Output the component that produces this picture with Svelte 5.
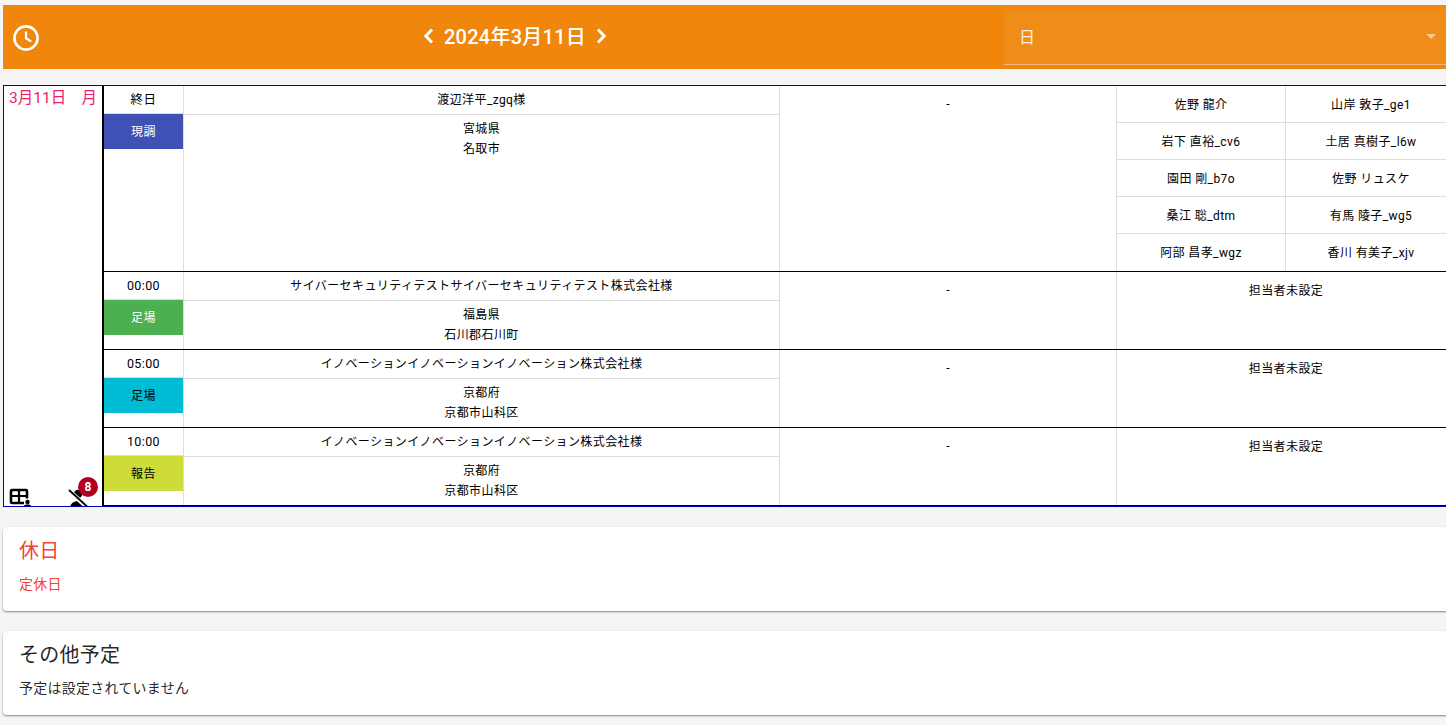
<script>
  const jobs = [
    { time: '00:00', tag: '足場', color: '#4caf50', fg: '#fff', client: 'サイバーセキュリティテストサイバーセキュリティテスト株式会社様', pref: '福島県', city: '石川郡石川町' },
    { time: '05:00', tag: '足場', color: '#00bcd4', fg: '#000', client: 'イノベーションイノベーションイノベーション株式会社様', pref: '京都府', city: '京都市山科区' },
    { time: '10:00', tag: '報告', color: '#cddc39', fg: '#000', client: 'イノベーションイノベーションイノベーション株式会社様', pref: '京都府', city: '京都市山科区' }
  ];
  const staff = ['佐野 龍介', '山岸 敦子_ge1', '岩下 直裕_cv6', '土居 真樹子_l6w', '園田 剛_b7o', '佐野 リュスケ', '桑江 聡_dtm', '有馬 陵子_wg5', '阿部 昌孝_wgz', '香川 有美子_xjv'];
</script>

<div class="page">
  <header class="bar">
    <svg class="clock" viewBox="0 0 26 26" aria-hidden="true">
      <circle cx="13" cy="13" r="11.6" fill="none" stroke="#fff" stroke-width="2.6" />
      <path d="M13 6.500v6.800l5.200 3.100" fill="none" stroke="#fff" stroke-width="2.300" />
    </svg>
    <div class="title">
      <svg class="chev" viewBox="0 0 11 16" aria-hidden="true"><path d="M9 1.500 2.800 8 9 14.500" fill="none" stroke="#fff" stroke-width="3" /></svg>
      <span>2024年3月11日</span>
      <svg class="chev" viewBox="0 0 11 16" aria-hidden="true"><path d="M2 1.500 8.200 8 2 14.500" fill="none" stroke="#fff" stroke-width="3" /></svg>
    </div>
    <div class="select">
      <span>日</span>
      <i class="caret"></i>
    </div>
  </header>

  <section class="sheet">
    <div class="day">
      <div class="date"><span>3月11日</span><span>月</span></div>
      <div class="tools">
        <svg class="tool" viewBox="0 0 24 24" aria-hidden="true">
          <rect x="2" y="3" width="16" height="13" rx="1" fill="none" stroke="#000" stroke-width="2.600" />
          <path d="M1 9h18M10 3v13" stroke="#000" stroke-width="2.200" />
          <path d="M15 11.500h8v9h-8z" fill="#fff" />
          <circle cx="18.500" cy="15" r="2.200" fill="#000" />
          <path d="M14 21c0-2.500 2.200-3.500 4.500-3.500s4.500 1 4.500 3.500z" fill="#000" />
        </svg>
        <div class="tool-wrap">
          <svg class="tool" viewBox="0 0 24 24" aria-hidden="true">
            <circle cx="13" cy="7" r="4.200" fill="#000" />
            <path d="M5 21c0-5 5-7 8-7s8 2 8 7z" fill="#000" />
            <path d="M3 3l20 18" stroke="#fff" stroke-width="4.500" />
            <path d="M4 3l18 16.500" stroke="#000" stroke-width="1.800" />
          </svg>
          <b class="badge">8</b>
        </div>
      </div>
    </div>

    <div class="rows">
      <div class="row first">
        <div class="when">
          <div class="time">終日</div>
          <div class="tag" style="background:#3f51b5;color:#fff">現調</div>
        </div>
        <div class="where">
          <div class="client">渡辺洋平_zgq様</div>
          <div class="addr"><span>宮城県</span><span>名取市</span></div>
        </div>
        <div class="dash">-</div>
        <div class="staff">
          {#each staff as name}
            <div class="person">{name}</div>
          {/each}
        </div>
      </div>

      {#each jobs as job}
        <div class="row">
          <div class="when">
            <div class="time">{job.time}</div>
            <div class="tag" style="background:{job.color};color:{job.fg}">{job.tag}</div>
          </div>
          <div class="where">
            <div class="client">{job.client}</div>
            <div class="addr"><span>{job.pref}</span><span>{job.city}</span></div>
          </div>
          <div class="dash">-</div>
          <div class="none">担当者未設定</div>
        </div>
      {/each}
    </div>
  </section>

  <section class="card holiday">
    <h2>休日</h2>
    <p>定休日</p>
  </section>
  <section class="card">
    <h2>その他予定</h2>
    <p>予定は設定されていません</p>
  </section>
</div>

<style>
  :global(body) {
    margin: 0;
    background: #f5f5f5;
    overflow: hidden;
    font-family: Roboto, "Noto Sans CJK JP", sans-serif;
    color: rgba(0, 0, 0, 0.87);
  }
  .page {
    width: 1450px;
    height: 725px;
    padding: 5px 0 0 3px;
    box-sizing: border-box;
    overflow: hidden;
  }
  .bar {
    height: 64px;
    background: #f0860b;
    display: flex;
    align-items: center;
    color: #fff;
  }
  .clock {
    width: 26px;
    height: 26px;
    margin: 1px 0 0 10px;
    flex: none;
  }
  .title {
    width: 965px;
    flex: none;
    box-sizing: border-box;
    padding-right: 13px;
    display: flex;
    align-items: center;
    justify-content: center;
    gap: 10px;
    font-size: 20px;
    font-weight: 500;
    letter-spacing: 0.25px;
    margin-top: -3px;
  }
  .chev {
    width: 11px;
    height: 16px;
  }
  .select {
    flex: 1;
    align-self: flex-start;
    margin-top: 4px;
    height: 55px;
    padding: 0 15px;
    background: rgba(255, 255, 255, 0.06);
    border-bottom: 1px solid rgba(255, 255, 255, 0.4);
    display: flex;
    align-items: center;
    justify-content: space-between;
    font-size: 16px;
    color: rgba(255, 255, 255, 0.87);
  }
  .select span {
    margin-top: -1px;
  }
  .caret {
    border: 5px solid transparent;
    border-top-color: rgba(255, 255, 255, 0.55);
    border-bottom-width: 0;
    margin-right: -1px;
  }
  .sheet {
    margin-top: 16px;
    display: flex;
    background: #fff;
    border: 1px solid #0000c0;
    height: 420px;
    color: #000;
  }
  .day {
    width: 98px;
    flex: none;
    border-right: 2px solid #000;
    display: flex;
    flex-direction: column;
    justify-content: space-between;
    overflow: hidden;
  }
  .date {
    display: flex;
    justify-content: space-between;
    padding: 2px 5px 0;
    font-size: 15.5px;
    line-height: 20px;
    color: #e91e63;
  }
  .tools {
    display: flex;
    justify-content: space-between;
    align-items: flex-end;
    height: 20px;
    padding: 0 13px 0 5px;
  }
  .tool {
    width: 24px;
    height: 24px;
    flex: none;
    display: block;
    margin-bottom: -5px;
  }
  .tool-wrap {
    position: relative;
  }
  .badge {
    position: absolute;
    top: -10px;
    left: 13px;
    width: 20px;
    height: 20px;
    border-radius: 50%;
    background: #b00020;
    color: #fff;
    font-size: 12px;
    line-height: 20px;
    text-align: center;
  }
  .rows {
    flex: 1;
    display: flex;
    flex-direction: column;
    min-width: 0;
  }
  .row {
    display: grid;
    grid-template-columns: 80px 596px 337px 1fr;
    height: 78px;
    box-sizing: border-box;
    border-bottom: 1px solid #000;
    font-size: 12px;
    letter-spacing: 0.4px;
    line-height: 18px;
    text-align: center;
  }
  .row.first {
    height: 186px;
  }
  .when,
  .where,
  .dash {
    border-right: 1px solid #ddd;
    min-width: 0;
  }
  .time {
    height: 27px;
    line-height: 27px;
    border-bottom: 1px solid #ddd;
    font-size: 12.5px;
  }
  .client {
    height: 28px;
    line-height: 29px;
    border-bottom: 1px solid #ddd;
  }
  .tag {
    height: 35px;
    line-height: 36px;
  }
  .addr {
    display: flex;
    flex-direction: column;
    padding-top: 4px;
    line-height: 20px;
  }
  .dash {
    padding-top: 9px;
  }
  .none {
    padding-top: 10px;
    width: 338px;
  }
  .staff {
    display: grid;
    grid-template-columns: 169px 171px;
    grid-auto-rows: 37px;
    margin-bottom: -1px;
  }
  .person {
    display: flex;
    align-items: center;
    justify-content: center;
    padding-top: 1px;
    border-right: 1px solid #ddd;
    border-bottom: 1px solid #ddd;
    box-sizing: border-box;
  }
  .person:nth-last-child(-n + 2) {
    border-bottom: 0;
  }
  .card {
    margin-top: 20px;
    height: 84px;
    box-sizing: border-box;
    padding: 11px 16px;
    background: #fff;
    border-radius: 4px;
    box-shadow: 0 1px 2px rgba(0, 0, 0, 0.45);
  }
  .card h2 {
    margin: 0;
    font-size: 20px;
    font-weight: 400;
    letter-spacing: 0.25px;
    line-height: 26px;
  }
  .card p {
    margin: 10px 0 0;
    font-size: 14px;
    letter-spacing: 0.25px;
    line-height: 20px;
  }
  .holiday {
    color: #f44336;
  }
</style>
